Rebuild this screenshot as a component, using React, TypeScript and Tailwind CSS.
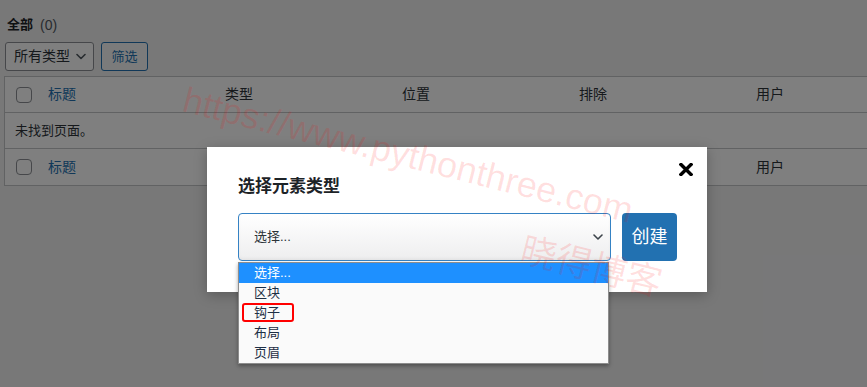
import React from "react";

const font = "font-['Liberation_Sans','Noto_Sans_CJK_SC',sans-serif]";

function Checkbox() {
  return <div className="h-[16px] w-[16px] rounded-[4px] border border-[#8c8f94] bg-white" />;
}

function HeaderRow({ last }: { last?: boolean }) {
  return (
    <div className={`flex h-[36px] items-center text-[14px] text-[#2c3338] ${last ? "" : "border-b border-[#c3c4c7]"}`}>
      <div className="flex w-[35px] shrink-0 items-center pl-[11px]">
        <Checkbox />
      </div>
      <div className="w-[177px] shrink-0 pl-[8px] text-[#2271b1]">标题</div>
      <div className="w-[177px] shrink-0 pl-[8px]">类型</div>
      <div className="w-[177px] shrink-0 pl-[8px]">位置</div>
      <div className="w-[177px] shrink-0 pl-[8px]">排除</div>
      <div className="w-[177px] shrink-0 pl-[8px]">用户</div>
    </div>
  );
}

function Chevron({ className }: { className?: string }) {
  return (
    <svg className={className} viewBox="0 0 10 6" fill="none">
      <path d="M1 1 L5 5 L9 1" stroke="currentColor" strokeWidth="1.6" strokeLinecap="round" strokeLinejoin="round" />
    </svg>
  );
}

export default function App() {
  const options = ["选择...", "区块", "钩子", "布局", "页眉"];
  return (
    <div className={`relative h-[387px] w-full overflow-hidden bg-[#f0f0f1] ${font}`}>
      {/* page */}
      <div className="pl-[4px] pt-[15px]">
        <div className="flex h-[20px] items-center pl-[3px] text-[13px] leading-[20px]">
          <span className="font-bold text-[#1d2327]">全部</span>
          <span className="ml-[7px] text-[14px] text-[#50575e]">(0)</span>
        </div>
        <div className="mt-[7px] flex gap-[7px] pl-[1px]">
          <div className="flex h-[29px] w-[89px] items-center rounded-[3px] border border-[#8c8f94] bg-white pl-[8px] text-[14px] text-[#2c3338]">
            <span>所有类型</span>
            <Chevron className="ml-[6px] h-[7px] w-[10px] text-[#50575e]" />
          </div>
          <div className="flex h-[29px] w-[47px] items-center justify-center rounded-[3px] border border-[#2271b1] bg-[#f6f7f7] text-[13px] text-[#2271b1]">
            筛选
          </div>
        </div>
        <div className="mt-[5px] w-[920px] border border-[#c3c4c7] bg-white">
          <HeaderRow />
          <div className="flex h-[36px] items-center border-b border-[#c3c4c7] pl-[10px] text-[13px] text-[#2c3338]">
            未找到页面。
          </div>
          <HeaderRow last />
        </div>
      </div>

      {/* overlay */}
      <div className="absolute inset-0 bg-black/50" />

      {/* modal */}
      <div className="absolute left-[207px] top-[147px] h-[145px] w-[500px] bg-white pl-[31px] pt-[28px] shadow-[0_3px_12px_rgba(0,0,0,0.25)]">
        <svg className="absolute right-[14px] top-[16px] h-[13px] w-[14px]" viewBox="0 0 14 13">
          <path d="M2 1.5 L12 11.5 M12 1.5 L2 11.5" stroke="#000" strokeWidth="3.4" strokeLinecap="square" />
        </svg>
        <div className="text-[17px] font-semibold leading-[24px] text-[#1d2327]">选择元素类型</div>
        <div className="mt-[14px] flex gap-[11px]">
          <div className="flex h-[48px] w-[373px] items-center justify-between rounded-[4px] border border-[#3582c4] bg-gradient-to-b from-white to-[#eeeeef] pl-[15px] pr-[7px] text-[13px] text-[#2c3338] shadow-[inset_0_-2px_3px_rgba(0,0,0,0.04)]">
            <span>选择...</span>
            <Chevron className="h-[6px] w-[10px] text-[#3c434a]" />
          </div>
          <div className="flex h-[48px] w-[55px] items-center justify-center rounded-[4px] bg-[#2271b1] text-[18px] text-white">
            创建
          </div>
        </div>
      </div>

      {/* dropdown list */}
      <div className="absolute left-[238px] top-[262px] w-[371px] border border-[#8d8d8d] bg-[#fafafa] py-0 text-[13px] shadow-[0_2px_4px_rgba(0,0,0,0.35)]">
        {options.map((o, i) => (
          <div
            key={o}
            className={`relative flex h-[20px] items-center pl-[15px] ${i === 0 ? "bg-[#1e90ff] text-white" : "text-[#1d2f45]"}`}
          >
            {o}
            {i === 2 && (
              <div className="absolute left-[3px] top-0 h-[19px] w-[52px] rounded-[3px] border-2 border-[#ff0000]" />
            )}
          </div>
        ))}
      </div>

      {/* watermark */}
      <div className="pointer-events-none absolute left-[188px] top-[82px] origin-top-left rotate-[14deg] font-['Liberation_Sans','Noto_Sans_CJK_SC',sans-serif] text-[36px] leading-[36px] whitespace-nowrap text-[rgba(255,0,0,0.13)]">
        <div>https://www.pythonthree.com</div>
        <div className="ml-[364px] mt-[28px]">晓得博客</div>
      </div>
    </div>
  );
}
